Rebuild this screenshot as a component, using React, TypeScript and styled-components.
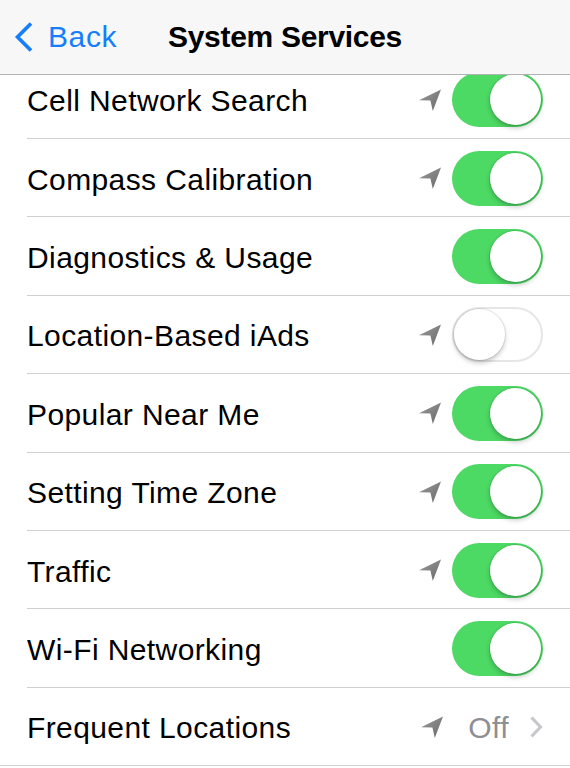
import React from "react";
import styled, { createGlobalStyle } from "styled-components";

const Global = createGlobalStyle`
  html, body { margin: 0; padding: 0; background: #ffffff; }
  body { font-family: "Liberation Sans", Arial, sans-serif; -webkit-font-smoothing: antialiased; }
  * { box-sizing: border-box; }
`;

const Screen = styled.div`
  width: 570px;
  height: 768px;
  overflow: hidden;
  display: flex;
  flex-direction: column;
  background: #ffffff;
`;

const NavBar = styled.div`
  position: relative;
  height: 75px;
  flex: none;
  background: #f7f7f7;
  border-bottom: 1px solid #b2b2b2;
  display: flex;
  align-items: center;
  padding: 0 0 1px 14px;
  z-index: 2;
`;

const BackButton = styled.div`
  display: flex;
  align-items: center;
  gap: 14px;
  color: #157efb;
  font-size: 30px;
  letter-spacing: 0.6px;
`;

const Title = styled.div`
  position: absolute;
  left: 0;
  right: 0;
  top: 0;
  bottom: 1px;
  display: flex;
  align-items: center;
  justify-content: center;
  font-size: 30px;
  font-weight: 700;
  color: #000;
  pointer-events: none;
  letter-spacing: -0.3px;
`;

const List = styled.div`
  flex: 1;
  overflow: hidden;
  display: flex;
  flex-direction: column;
`;

const Row = styled.div<{ $first?: boolean; $last?: boolean }>`
  position: relative;
  flex: none;
  height: 78.4px;
  margin-top: ${(p) => (p.$first ? "-14.4px" : "0")};
  display: flex;
  align-items: center;
  padding: 0 27px 0 27px;
  &::after {
    content: "";
    position: absolute;
    left: ${(p) => (p.$last ? "0" : "27px")};
    right: 0;
    bottom: 0;
    height: 1px;
    background: #d0cfd4;
  }
`;

const Label = styled.div`
  flex: 1;
  font-size: 30px;
  color: #000;
  letter-spacing: 0.4px;
  padding-top: 3px;
`;

const Accessory = styled.div`
  display: flex;
  align-items: center;
`;

const ArrowWrap = styled.div`
  width: 24px;
  height: 24px;
  margin-right: 10px;
  display: flex;
  align-items: center;
  justify-content: center;
`;

const Toggle = styled.div<{ $on: boolean }>`
  position: relative;
  width: 91px;
  height: 55px;
  border-radius: 28px;
  background: ${(p) => (p.$on ? "#4cd964" : "#ffffff")};
  border: ${(p) => (p.$on ? "none" : "2px solid #e6e6e6")};
`;

const Knob = styled.div<{ $on: boolean }>`
  position: absolute;
  top: ${(p) => (p.$on ? "2px" : "0")};
  left: ${(p) => (p.$on ? "38px" : "0")};
  width: 51px;
  height: 51px;
  border-radius: 50%;
  background: #ffffff;
  box-shadow: 0 3px 5px rgba(0, 0, 0, 0.22), 0 0 0 1px rgba(0, 0, 0, 0.08);
`;

const Detail = styled.div`
  font-size: 30px;
  color: #8e8e93;
  margin: 0 20px 0 14px;
  padding-top: 3px;
  letter-spacing: 0.4px;
`;

const LocationArrow = () => (
  <svg width="24" height="24" viewBox="0 0 24 24">
    <defs>
      <linearGradient id="la" x1="0" y1="0" x2="1" y2="1">
        <stop offset="0" stopColor="#9a9a9a" />
        <stop offset="1" stopColor="#6a6a6a" />
      </linearGradient>
    </defs>
    <path d="M1 12.2 L23 1.5 L14.8 23 L12.4 12.4 Z" fill="url(#la)" />
  </svg>
);

const Chevron = () => (
  <svg width="14" height="24" viewBox="0 0 14 24">
    <path d="M2.5 2.5 L11.5 12 L2.5 21.5" fill="none" stroke="#c7c7cc" strokeWidth="3.2" />
  </svg>
);

const BackChevron = () => (
  <svg width="20" height="32" viewBox="0 0 20 32">
    <path d="M17 2.5 L3.5 16 L17 29.5" fill="none" stroke="#157efb" strokeWidth="3.6" strokeLinecap="butt" />
  </svg>
);

type Item = { label: string; arrow: boolean; on?: boolean; detail?: string };

const items: Item[] = [
  { label: "Cell Network Search", arrow: true, on: true },
  { label: "Compass Calibration", arrow: true, on: true },
  { label: "Diagnostics & Usage", arrow: false, on: true },
  { label: "Location-Based iAds", arrow: true, on: false },
  { label: "Popular Near Me", arrow: true, on: true },
  { label: "Setting Time Zone", arrow: true, on: true },
  { label: "Traffic", arrow: true, on: true },
  { label: "Wi-Fi Networking", arrow: false, on: true },
  { label: "Frequent Locations", arrow: true, detail: "Off" },
];

export default function App() {
  return (
    <>
      <Global />
      <Screen>
        <NavBar>
          <BackButton>
            <BackChevron />
            <span>Back</span>
          </BackButton>
          <Title>System Services</Title>
        </NavBar>
        <List>
          {items.map((it, i) => (
            <Row key={it.label} $first={i === 0} $last={i === items.length - 1}>
              <Label>{it.label}</Label>
              <Accessory>
                {it.arrow && (
                  <ArrowWrap>
                    <LocationArrow />
                  </ArrowWrap>
                )}
                {it.detail ? (
                  <>
                    <Detail>{it.detail}</Detail>
                    <Chevron />
                  </>
                ) : (
                  <Toggle $on={!!it.on}>
                    <Knob $on={!!it.on} />
                  </Toggle>
                )}
              </Accessory>
            </Row>
          ))}
        </List>
      </Screen>
    </>
  );
}
